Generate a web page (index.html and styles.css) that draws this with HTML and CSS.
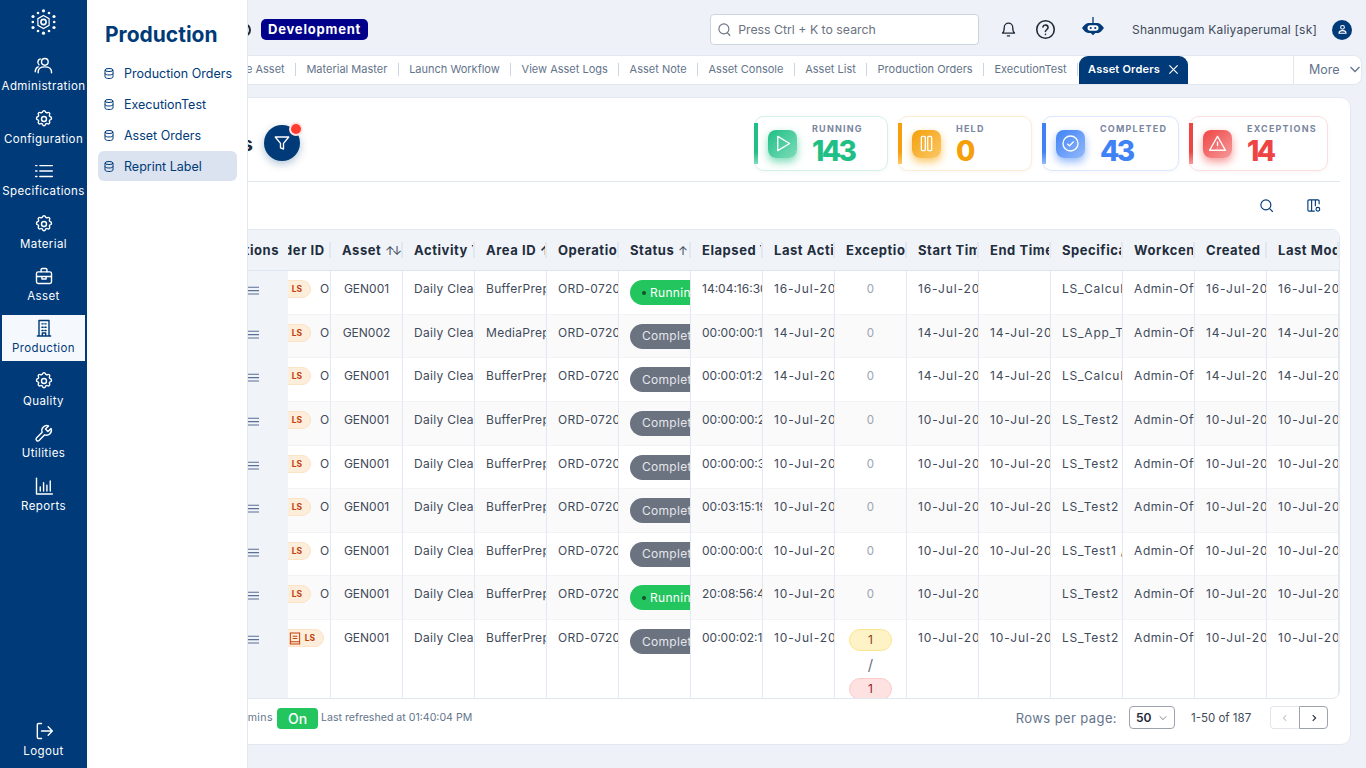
FILE: index.html
```html
<!DOCTYPE html>
<html lang="en">
<head>
  <meta charset="UTF-8">
  <meta name="viewport" content="width=device-width, initial-scale=1.0">
  <title>Asset Orders</title>
  <link rel="stylesheet" href="styles.css">
</head>
<body>
  <svg class="defs" width="0" height="0">
    <symbol id="i-gear" viewBox="0 0 24 24"><circle cx="12" cy="12" r="3"/><path d="M10.3 3.2c.4-1.6 3-1.6 3.4 0a1.7 1.7 0 0 0 2.6 1.1c1.4-.9 3.3 1 2.4 2.4a1.7 1.7 0 0 0 1.1 2.6c1.6.4 1.6 3 0 3.4a1.7 1.7 0 0 0-1.1 2.6c.9 1.4-1 3.3-2.4 2.4a1.7 1.7 0 0 0-2.6 1.1c-.4 1.6-3 1.6-3.4 0a1.7 1.7 0 0 0-2.6-1.1c-1.4.9-3.3-1-2.4-2.4a1.7 1.7 0 0 0-1.1-2.6c-1.6-.4-1.6-3 0-3.4a1.7 1.7 0 0 0 1.1-2.6c-.9-1.4 1-3.3 2.4-2.4a1.7 1.7 0 0 0 2.6-1.1z"/></symbol>
    <symbol id="i-db" viewBox="0 0 24 24"><ellipse cx="12" cy="5" rx="8" ry="3"/><path d="M4 5v14c0 1.700 3.600 3 8 3s8-1.300 8-3V5"/><path d="M4 12c0 1.700 3.600 3 8 3s8-1.300 8-3"/></symbol>
    <symbol id="i-menu" viewBox="0 0 12 12"><path d="M0 2.200h11M0 5.600h11M0 9h11"/></symbol>
  </svg>

  <div class="app">
    <nav class="rail">
      <div class="rail-logo">
        <svg width="25" height="26" viewBox="0 0 25 26" fill="#fff" stroke="#fff">
          <circle cx="12.500" cy="13" r="2.600" fill="none" stroke-width="1.600"/>
          <path d="M12.500 6.500l5.600 3.200v6.600l-5.600 3.200-5.600-3.200V9.700z" fill="none" stroke-width="1.200"/>
          <g stroke="none">
            <circle cx="12.500" cy="1.800" r="1.600"/><circle cx="18" cy="4" r="1.300"/><circle cx="23" cy="7.500" r="1.600"/>
            <circle cx="23.200" cy="13" r="1.300"/><circle cx="23" cy="18.500" r="1.600"/><circle cx="18" cy="22" r="1.300"/>
            <circle cx="12.500" cy="24.200" r="1.600"/><circle cx="7" cy="22" r="1.300"/><circle cx="2" cy="18.500" r="1.600"/>
            <circle cx="1.800" cy="13" r="1.300"/><circle cx="2" cy="7.500" r="1.600"/><circle cx="7" cy="4" r="1.300"/>
          </g>
        </svg>
      </div>
      <a class="rail-item">
        <svg class="rail-icon" viewBox="0 0 24 24"><circle cx="13" cy="7" r="4"/><path d="M5 20v-1c0-3.500 3-6 8-6s8 2.500 8 6v1"/><path d="M7.500 3.600A4 4 0 0 0 6 10.500M1.500 19c0-3 1-5 3.500-6"/></svg>
        <span>Administration</span>
      </a>
      <a class="rail-item"><svg class="rail-icon"><use href="#i-gear"/></svg><span>Configuration</span></a>
      <a class="rail-item">
        <svg class="rail-icon" viewBox="0 0 24 24"><path d="M7 5.500h15M7 12h15M7 18.500h15M2 5.500h1.500M2 12h1.500M2 18.500h1.500"/></svg>
        <span>Specifications</span>
      </a>
      <a class="rail-item"><svg class="rail-icon"><use href="#i-gear"/></svg><span>Material</span></a>
      <a class="rail-item">
        <svg class="rail-icon" viewBox="0 0 24 24"><rect x="3" y="7" width="18" height="14" rx="2"/><path d="M8.500 7V4.500A1.500 1.500 0 0 1 10 3h4a1.500 1.500 0 0 1 1.500 1.500V7M3 12.500h18M9.500 12.500v3h5v-3"/></svg>
        <span>Asset</span>
      </a>
      <a class="rail-item is-active">
        <svg class="rail-icon" viewBox="0 0 24 24"><path d="M6 21.500V3h12v18.500M4 21.500h16M9.500 7h1.500M13 7h1.500M9.500 11h1.500M13 11h1.500M9.500 15h1.500M13 15h1.500M10 21v-3h4v3"/></svg>
        <span>Production</span>
      </a>
      <a class="rail-item"><svg class="rail-icon"><use href="#i-gear"/></svg><span>Quality</span></a>
      <a class="rail-item">
        <svg class="rail-icon" viewBox="0 0 24 24"><path d="M20.500 6.500l-3.800 3.800-3-3 3.800-3.800a6 6 0 0 0-7.700 7.700L3 17.900A2.200 2.200 0 0 0 6.100 21l6.700-6.800a6 6 0 0 0 7.700-7.700z"/></svg>
        <span>Utilities</span>
      </a>
      <a class="rail-item">
        <svg class="rail-icon" viewBox="0 0 24 24"><path d="M3 2.500V21.500h19M7.500 18v-5M11.500 18V8M15.500 18v-7M19.500 18V6"/></svg>
        <span>Reports</span>
      </a>
      <a class="rail-item rail-logout">
        <svg class="rail-icon" viewBox="0 0 24 24"><path d="M9 3H5.500A1.500 1.500 0 0 0 4 4.500v15A1.500 1.500 0 0 0 5.500 21H9M9 12h13M17 7l5 5-5 5"/></svg>
        <span>Logout</span>
      </a>
    </nav>

    <aside class="flyout">
      <h2 class="flyout-title">Production</h2>
      <a class="flyout-item"><svg class="db-icon"><use href="#i-db"/></svg>Production Orders</a>
      <a class="flyout-item"><svg class="db-icon"><use href="#i-db"/></svg>ExecutionTest</a>
      <a class="flyout-item"><svg class="db-icon"><use href="#i-db"/></svg>Asset Orders</a>
      <a class="flyout-item is-active"><svg class="db-icon"><use href="#i-db"/></svg>Reprint Label</a>
    </aside>

    <main class="main">
      <header class="topbar">
        <span class="site-mark"></span>
        <span class="env-badge">Development</span>
        <div class="search">
          <svg class="search-icon" viewBox="0 0 24 24"><circle cx="11" cy="11" r="8"/><path d="M21 22l-4.500-5"/></svg>
          <span>Press Ctrl + K to search</span>
        </div>
        <svg class="top-icon bell" viewBox="0 0 24 24"><path d="M6 9a6 6 0 0 1 12 0c0 6 2.500 8 2.500 8h-17S6 15 6 9zM10.500 21h3"/></svg>
        <svg class="top-icon help" viewBox="0 0 24 24"><circle cx="12" cy="12" r="10"/><path d="M9 9.200a3 3 0 0 1 5.900.8c0 2-3 2.500-3 4.200M12 17.500v.2"/></svg>
        <svg class="bot" viewBox="0 0 24 24" fill="#003a78">
          <path d="M11.300 0h1.400v7h-1.400z"/>
          <path d="M7 6.500h10c3 0 5 3 7 5.500-2 2.500-4 5.500-7 5.500h-2.500L12 20l-2.500-2.500H7c-3 0-5-3-7-5.500 2-2.500 4-5.500 7-5.500z"/>
          <rect x="6" y="9" width="12" height="6" rx="3" fill="#fff"/>
          <circle cx="9.500" cy="12" r="1.200"/><circle cx="14.500" cy="12" r="1.200"/>
        </svg>
        <div class="user">
          <span class="user-name">Shanmugam Kaliyaperumal [sk]</span>
          <span class="avatar">
            <svg viewBox="0 0 24 24"><circle cx="12" cy="8" r="3.500"/><path d="M5.500 19c0-3.500 3-5 6.500-5s6.500 1.500 6.500 5z"/></svg>
          </span>
        </div>
      </header>

      <div class="tabbar">
        <div class="tabs">
          <a class="tab tab-cut">Manage Asset</a>
          <a class="tab">Material Master</a>
          <a class="tab">Launch Workflow</a>
          <a class="tab">View Asset Logs</a>
          <a class="tab">Asset Note</a>
          <a class="tab">Asset Console</a>
          <a class="tab">Asset List</a>
          <a class="tab">Production Orders</a>
          <a class="tab">ExecutionTest</a>
          <a class="tab-active">Asset Orders
            <svg viewBox="0 0 12 12"><path d="M1.500 1.500l9 9M10.500 1.500l-9 9"/></svg>
          </a>
        </div>
        <div class="more">More
          <svg viewBox="0 0 12 12"><path d="M1.500 4l4.500 4.500L10.500 4"/></svg>
        </div>
      </div>

      <section class="card">
        <div class="summary">
          <h1 class="page-title">Asset Orders</h1>
          <button class="filter-btn">
            <svg viewBox="0 0 24 24"><path d="M3 4h18l-7 8.500V20l-4-1.500v-6z"/></svg>
            <span class="filter-dot"></span>
          </button>
          <div class="stats">
            <div class="stat stat-running">
              <span class="stat-icon"><svg viewBox="0 0 24 24"><path d="M6 3l15 9-15 9z"/></svg></span>
              <div class="stat-text"><span class="stat-label">RUNNING</span><span class="stat-value">143</span></div>
            </div>
            <div class="stat stat-held">
              <span class="stat-icon"><svg viewBox="0 0 24 24"><rect x="5.500" y="3" width="5" height="18" rx="1.500"/><rect x="13.500" y="3" width="5" height="18" rx="1.500"/></svg></span>
              <div class="stat-text"><span class="stat-label">HELD</span><span class="stat-value">0</span></div>
            </div>
            <div class="stat stat-done">
              <span class="stat-icon"><svg viewBox="0 0 24 24"><circle cx="12" cy="12" r="9.500"/><path d="M8 12.300l2.800 2.700L16 9.500"/></svg></span>
              <div class="stat-text"><span class="stat-label">COMPLETED</span><span class="stat-value">43</span></div>
            </div>
            <div class="stat stat-error">
              <span class="stat-icon"><svg viewBox="0 0 24 24"><path d="M12 3L2 20.500h20zM12 9.500v5.500M12 17.500v.5"/></svg></span>
              <div class="stat-text"><span class="stat-label">EXCEPTIONS</span><span class="stat-value">14</span></div>
            </div>
          </div>
        </div>

        <div class="toolbar">
          <svg class="tool-icon" viewBox="0 0 24 24"><circle cx="11" cy="11" r="8"/><path d="M17 17l5 5"/></svg>
          <svg class="tool-icon" viewBox="0 0 24 24"><path d="M21 10V5a2 2 0 0 0-2-2H5a2 2 0 0 0-2 2v14a2 2 0 0 0 2 2h9M9 3v18M15 3v10"/><circle cx="19" cy="18" r="3"/></svg>
        </div>

        <div class="table-wrap">
          <table class="orders">
            <colgroup>
              <col class="col-actions"><col class="col-order">
              <col class="col-std"><col class="col-std"><col class="col-std"><col class="col-std"><col class="col-std"><col class="col-std"><col class="col-std">
              <col class="col-std"><col class="col-std"><col class="col-std"><col class="col-std"><col class="col-std"><col class="col-std"><col class="col-std">
            </colgroup>
            <thead>
              <tr>
                <th class="cell-actions">Actions</th>
                <th class="cell-order"><span class="cut">Order ID</span></th>
                <th>Asset <span class="sort">↑↓</span></th>
                <th>Activity Type</th>
                <th>Area ID ↑</th>
                <th>Operation</th>
                <th>Status <span class="sort">↑</span></th>
                <th>Elapsed Time</th>
                <th>Last Activity</th>
                <th>Exceptions</th>
                <th>Start Time</th>
                <th>End Time</th>
                <th>Specification</th>
                <th>Workcenter</th>
                <th>Created</th>
                <th>Last Modified</th>
              </tr>
            </thead>
            <tbody>
              <tr>
                <td class="cell-actions"><svg class="row-menu"><use href="#i-menu"/></svg></td>
                <td class="cell-order"><div class="order-inner"><span class="ls">LS</span><span>ORD-07</span></div></td>
                <td class="center">GEN001</td><td>Daily Cleaning</td><td>BufferPrep</td><td>ORD-07201</td>
                <td><span class="pill pill-run"><i></i>Running</span></td>
                <td>14:04:16:30</td><td>16-Jul-2025</td><td class="center zero">0</td><td>16-Jul-2025</td><td></td><td>LS_Calculate</td><td>Admin-Office</td><td>16-Jul-2025</td><td>16-Jul-2025</td>
              </tr>
              <tr>
                <td class="cell-actions"><svg class="row-menu"><use href="#i-menu"/></svg></td>
                <td class="cell-order"><div class="order-inner"><span class="ls">LS</span><span>ORD-07</span></div></td>
                <td class="center">GEN002</td><td>Daily Cleaning</td><td>MediaPrep</td><td>ORD-07202</td>
                <td><span class="pill pill-done">Completed</span></td>
                <td>00:00:00:12</td><td>14-Jul-2025</td><td class="center zero">0</td><td>14-Jul-2025</td><td>14-Jul-2025</td><td>LS_App_Test</td><td>Admin-Office</td><td>14-Jul-2025</td><td>14-Jul-2025</td>
              </tr>
              <tr>
                <td class="cell-actions"><svg class="row-menu"><use href="#i-menu"/></svg></td>
                <td class="cell-order"><div class="order-inner"><span class="ls">LS</span><span>ORD-07</span></div></td>
                <td class="center">GEN001</td><td>Daily Cleaning</td><td>BufferPrep</td><td>ORD-07203</td>
                <td><span class="pill pill-done">Completed</span></td>
                <td>00:00:01:24</td><td>14-Jul-2025</td><td class="center zero">0</td><td>14-Jul-2025</td><td>14-Jul-2025</td><td>LS_Calculate</td><td>Admin-Office</td><td>14-Jul-2025</td><td>14-Jul-2025</td>
              </tr>
              <tr>
                <td class="cell-actions"><svg class="row-menu"><use href="#i-menu"/></svg></td>
                <td class="cell-order"><div class="order-inner"><span class="ls">LS</span><span>ORD-07</span></div></td>
                <td class="center">GEN001</td><td>Daily Cleaning</td><td>BufferPrep</td><td>ORD-07204</td>
                <td><span class="pill pill-done">Completed</span></td>
                <td>00:00:00:26</td><td>10-Jul-2025</td><td class="center zero">0</td><td>10-Jul-2025</td><td>10-Jul-2025</td><td>LS_Test2 / 1</td><td>Admin-Office</td><td>10-Jul-2025</td><td>10-Jul-2025</td>
              </tr>
              <tr>
                <td class="cell-actions"><svg class="row-menu"><use href="#i-menu"/></svg></td>
                <td class="cell-order"><div class="order-inner"><span class="ls">LS</span><span>ORD-07</span></div></td>
                <td class="center">GEN001</td><td>Daily Cleaning</td><td>BufferPrep</td><td>ORD-07205</td>
                <td><span class="pill pill-done">Completed</span></td>
                <td>00:00:00:31</td><td>10-Jul-2025</td><td class="center zero">0</td><td>10-Jul-2025</td><td>10-Jul-2025</td><td>LS_Test2 / 1</td><td>Admin-Office</td><td>10-Jul-2025</td><td>10-Jul-2025</td>
              </tr>
              <tr>
                <td class="cell-actions"><svg class="row-menu"><use href="#i-menu"/></svg></td>
                <td class="cell-order"><div class="order-inner"><span class="ls">LS</span><span>ORD-07</span></div></td>
                <td class="center">GEN001</td><td>Daily Cleaning</td><td>BufferPrep</td><td>ORD-07206</td>
                <td><span class="pill pill-done">Completed</span></td>
                <td>00:03:15:19</td><td>10-Jul-2025</td><td class="center zero">0</td><td>10-Jul-2025</td><td>10-Jul-2025</td><td>LS_Test2 / 1</td><td>Admin-Office</td><td>10-Jul-2025</td><td>10-Jul-2025</td>
              </tr>
              <tr>
                <td class="cell-actions"><svg class="row-menu"><use href="#i-menu"/></svg></td>
                <td class="cell-order"><div class="order-inner"><span class="ls">LS</span><span>ORD-07</span></div></td>
                <td class="center">GEN001</td><td>Daily Cleaning</td><td>BufferPrep</td><td>ORD-07207</td>
                <td><span class="pill pill-done">Completed</span></td>
                <td>00:00:00:08</td><td>10-Jul-2025</td><td class="center zero">0</td><td>10-Jul-2025</td><td>10-Jul-2025</td><td>LS_Test1 / 1</td><td>Admin-Office</td><td>10-Jul-2025</td><td>10-Jul-2025</td>
              </tr>
              <tr>
                <td class="cell-actions"><svg class="row-menu"><use href="#i-menu"/></svg></td>
                <td class="cell-order"><div class="order-inner"><span class="ls">LS</span><span>ORD-07</span></div></td>
                <td class="center">GEN001</td><td>Daily Cleaning</td><td>BufferPrep</td><td>ORD-07208</td>
                <td><span class="pill pill-run"><i></i>Running</span></td>
                <td>20:08:56:42</td><td>10-Jul-2025</td><td class="center zero">0</td><td>10-Jul-2025</td><td></td><td>LS_Test2 / 1</td><td>Admin-Office</td><td>10-Jul-2025</td><td>10-Jul-2025</td>
              </tr>
              <tr class="row-last">
                <td class="cell-actions"><svg class="row-menu"><use href="#i-menu"/></svg></td>
                <td class="cell-order"><div class="order-inner"><span class="ls ls-note"><svg viewBox="0 0 12 14"><path d="M1 1h10v12H1zM3.500 4.500h5M3.500 7h5M1 10.500h10"/></svg>LS</span></div></td>
                <td class="center">GEN001</td><td>Daily Cleaning</td><td>BufferPrep</td><td>ORD-07209</td>
                <td><span class="pill pill-done">Completed</span></td>
                <td>00:00:02:14</td><td>10-Jul-2025</td>
                <td class="center"><span class="exc exc-warn">1</span><span class="exc-sep">/</span><span class="exc exc-err">1</span></td>
                <td>10-Jul-2025</td><td>10-Jul-2025</td><td>LS_Test2 / 1</td><td>Admin-Office</td><td>10-Jul-2025</td><td>10-Jul-2025</td>
              </tr>
            </tbody>
          </table>
        </div>

        <footer class="card-foot">
          <span class="refresh-label">Auto refresh every 5 mins</span>
          <span class="on-badge">On</span>
          <span class="refreshed">Last refreshed at 01:40:04 PM</span>
          <div class="pager">
            <span class="rows-label">Rows per page:</span>
            <span class="rows-select">50
              <svg viewBox="0 0 12 12"><path d="M2 4l4 4 4-4"/></svg>
            </span>
            <span class="range">1-50 of 187</span>
            <div class="page-btns">
              <button class="page-btn is-off"><svg viewBox="0 0 12 12"><path d="M7.500 2.500L4 6l3.500 3.500"/></svg></button>
              <button class="page-btn"><svg viewBox="0 0 12 12"><path d="M4.500 2.500L8 6 4.500 9.500"/></svg></button>
            </div>
          </div>
        </footer>
      </section>
    </main>
  </div>
</body>
</html>
```

FILE: styles.css
```css
* {
  box-sizing: border-box;
}

html, body {
  height: 100%;
}

body {
  margin: 0;
  font-family: "Inter", "Open Sans", sans-serif;
  background: #eef1f7;
  color: #3f4a5a;
  overflow: hidden;
}

h1, h2 {
  margin: 0;
}

.defs {
  position: absolute;
}

.app {
  position: relative;
  display: flex;
  height: 768px;
}

/* left rail */
.rail {
  width: 87px;
  flex: none;
  display: flex;
  flex-direction: column;
  gap: 6.4px;
  padding: 0 2px;
  background: #003a78;
  color: #fff;
}

.rail-logo {
  height: 47px;
  display: flex;
  align-items: center;
  justify-content: center;
  padding-bottom: 3px;
}

.rail-item {
  height: 46px;
  display: flex;
  flex-direction: column;
  align-items: center;
  justify-content: flex-end;
  gap: 3px;
  padding-bottom: 5px;
  font-size: 11.5px;
  line-height: 15px;
  letter-spacing: 0.4px;
  white-space: nowrap;
}

.rail-icon {
  width: 20px;
  height: 20px;
  fill: none;
  stroke: #fff;
  stroke-width: 1.7;
  stroke-linecap: round;
  stroke-linejoin: round;
}

.rail-item.is-active {
  background: #f5f8fc;
  color: #003a78;
}

.rail-item.is-active .rail-icon {
  stroke: #003a78;
}

.rail-logout {
  margin-top: auto;
  margin-bottom: 4px;
}

/* second level menu, opened over the page */
.flyout {
  position: absolute;
  top: 0;
  left: 87px;
  bottom: 0;
  z-index: 5;
  width: 161px;
  padding: 22px 10px 0 11px;
  background: #fff;
  border-right: 1px solid #e2e8f0;
}

.flyout-title {
  height: 36px;
  padding-left: 7px;
  font-size: 21px;
  line-height: 25px;
  font-weight: 700;
  color: #003a78;
}

.flyout-item {
  height: 30px;
  margin-bottom: 1px;
  display: flex;
  align-items: center;
  gap: 9px;
  padding-left: 5px;
  border-radius: 6px;
  font-size: 12.5px;
  color: #003a78;
  white-space: nowrap;
}

.flyout-item.is-active {
  background: #dae3ef;
}

.db-icon {
  width: 12px;
  height: 13px;
  flex: none;
  fill: none;
  stroke: #003a78;
  stroke-width: 2;
}

/* page */
.main {
  flex: 1;
  min-width: 0;
  display: flex;
  flex-direction: column;
}

.topbar {
  height: 55px;
  flex: none;
  display: flex;
  align-items: center;
  padding: 4px 0 0 150px;
}

.site-mark {
  width: 14px;
  height: 14px;
  border: 2px solid #1f2937;
  border-radius: 50%;
}

.env-badge {
  height: 21px;
  margin-left: 10px;
  padding: 0 7px;
  border-radius: 5px;
  background: #00008b;
  color: #fff;
  font-size: 13px;
  line-height: 20px;
  font-weight: 700;
  letter-spacing: 0.8px;
}

.search {
  width: 269px;
  height: 31px;
  margin-left: 342px;
  display: flex;
  align-items: center;
  gap: 6px;
  padding-left: 6px;
  background: #fff;
  border: 1px solid #cbd5e1;
  border-radius: 4px;
  font-size: 12.3px;
  color: #6b7280;
}

.search-icon {
  width: 15px;
  height: 15px;
  fill: none;
  stroke: #6b7280;
  stroke-width: 1.8;
}

.top-icon {
  fill: none;
  stroke: #1f2937;
  stroke-width: 1.8;
  stroke-linecap: round;
  stroke-linejoin: round;
}

.bell {
  width: 17px;
  height: 17px;
  margin-left: 21px;
}

.help {
  width: 21px;
  height: 21px;
  margin-left: 18px;
}

.bot {
  width: 22px;
  height: 22px;
  margin-left: 26px;
  margin-top: -3px;
}

.user {
  margin-left: auto;
  display: flex;
  align-items: center;
  gap: 15px;
  padding-right: 14px;
}

.user-name {
  font-size: 12px;
  letter-spacing: 0.2px;
}

.avatar {
  width: 20px;
  height: 20px;
  display: flex;
  align-items: center;
  justify-content: center;
  border-radius: 50%;
  background: #003a78;
}

.avatar svg {
  width: 13px;
  height: 13px;
  fill: none;
  stroke: #fff;
  stroke-width: 2;
}

/* tabs */
.tabbar {
  height: 30px;
  flex: none;
  display: flex;
  margin-right: 4px;
  background: #fff;
  border-top: 1px solid #e2e8f0;
  border-bottom: 1px solid #e2e8f0;
  border-right: 1px solid #e2e8f0;
  border-radius: 0 8px 8px 0;
}

.tabs {
  flex: 1;
  min-width: 0;
  display: flex;
  align-items: center;
  padding-left: 113px;
  overflow: hidden;
}

.tab {
  height: 13px;
  margin-bottom: 2px;
  flex: none;
  display: flex;
  align-items: center;
  padding: 0 10.4px;
  border-right: 1px solid #cbd5e1;
  font-size: 11px;
  color: #64748b;
  white-space: nowrap;
}

.tab:last-of-type {
  border-right: none;
}

.tab-active {
  position: relative;
  height: 28px;
  margin-left: 1px;
  flex: none;
  display: flex;
  align-items: center;
  gap: 8px;
  padding: 0 9px 2px;
  background: #003a78;
  border-radius: 9px 9px 0 0;
  color: #fff;
  font-size: 11px;
  font-weight: 600;
  letter-spacing: 0.2px;
  white-space: nowrap;
}

.tab-active svg {
  width: 11px;
  height: 11px;
  fill: none;
  stroke: #fff;
  stroke-width: 1.3;
}

.more {
  width: 68px;
  flex: none;
  display: flex;
  align-items: center;
  gap: 9px;
  padding: 0 0 2px 15px;
  border-left: 1px solid #e2e8f0;
  font-size: 12.5px;
  color: #64748b;
}

.more svg {
  width: 12px;
  height: 12px;
  fill: none;
  stroke: #64748b;
  stroke-width: 1.3;
}

/* main card */
.card {
  height: 648px;
  margin: 12px 15px 0 10px;
  display: flex;
  flex-direction: column;
  padding: 0 10px 0 9px;
  background: #fff;
  border: 1px solid #e2e8f0;
  border-radius: 10px;
}

.summary {
  flex: none;
  display: flex;
  align-items: center;
  padding: 18px 0 10px;
  border-bottom: 1px solid #e2e8f0;
}

.page-title {
  width: 146px;
  flex: none;
  padding-left: 1px;
  font-size: 20px;
  font-weight: 700;
  color: #1f2937;
  text-align: right;
  white-space: nowrap;
}

.filter-btn {
  position: relative;
  width: 36px;
  height: 36px;
  margin: -1px 0 0 11px;
  display: flex;
  align-items: center;
  justify-content: center;
  padding: 0;
  border: none;
  border-radius: 50%;
  background: #003a78;
  box-shadow: 0 3px 9px rgba(0, 58, 120, 0.3);
}

.filter-btn svg {
  width: 18px;
  height: 18px;
  fill: none;
  stroke: #fff;
  stroke-width: 1.8;
  stroke-linejoin: round;
}

.filter-dot {
  position: absolute;
  top: -1px;
  right: -1px;
  width: 10px;
  height: 10px;
  border-radius: 50%;
  background: #ff3b30;
  box-shadow: 0 0 0 2px #fde4e2;
}

.stats {
  margin-left: auto;
  margin-right: 12px;
  display: flex;
  gap: 10px;
}

.stat {
  position: relative;
  height: 55px;
  display: flex;
  align-items: center;
  gap: 15px;
  padding-left: 13px;
  background: #fff;
  border: 1px solid;
  border-radius: 10px;
  box-shadow: 0 1px 4px rgba(15, 23, 42, 0.04);
}

.stat::before {
  content: "";
  position: absolute;
  left: -1px;
  top: 6px;
  bottom: 6px;
  width: 4px;
  background: linear-gradient(to bottom, var(--tone) 70%, var(--tone-soft));
}

.stat-running { width: 134px; border-color: #d3f2e6; --tone: #1fbf85; --tone-soft: #7edcb9; }
.stat-held { width: 134px; border-color: #fdedd3; --tone: #f59f0b; --tone-soft: #fbc867; }
.stat-done { width: 137px; border-color: #dbe7fe; --tone: #3f82f6; --tone-soft: #93b9fa; }
.stat-error { width: 139px; border-color: #fddede; --tone: #ef4444; --tone-soft: #f79a9a; }

.stat-icon {
  width: 29px;
  height: 28px;
  flex: none;
  display: flex;
  align-items: center;
  justify-content: center;
  border-radius: 8px;
  background: linear-gradient(135deg, var(--tone), var(--tone-soft));
  box-shadow: 0 4px 9px var(--tone-soft);
}

.stat-icon svg {
  width: 19px;
  height: 19px;
  fill: none;
  stroke: #fff;
  stroke-width: 1.7;
  stroke-linejoin: round;
}

.stat-text {
  display: flex;
  flex-direction: column;
}

.stat-label {
  font-size: 9px;
  line-height: 12px;
  font-weight: 700;
  letter-spacing: 1.2px;
  color: #7a86a0;
}

.stat-value {
  margin-top: 2px;
  font-size: 28px;
  line-height: 28px;
  font-weight: 800;
  letter-spacing: -2.6px;
  color: var(--tone);
}

.toolbar {
  height: 47px;
  flex: none;
  display: flex;
  align-items: center;
  justify-content: flex-end;
  gap: 32px;
  padding: 0 19px 0 0;
}

.tool-icon {
  width: 15px;
  height: 15px;
  fill: none;
  stroke: #003a78;
  stroke-width: 1.8;
}

/* table */
.table-wrap {
  flex: 1;
  min-height: 0;
  overflow: hidden;
  border: 1px solid #e2e8f0;
  border-radius: 0 8px 8px 0;
}

.orders {
  table-layout: fixed;
  width: 1231px;
  border-collapse: separate;
  border-spacing: 0;
  font-size: 12px;
}

.col-actions { width: 180px; }
.col-order { width: 43px; }
.col-std { width: 72px; }

.orders th {
  position: relative;
  height: 41px;
  padding: 0 0 0 11px;
  background: #f0f4f9;
  border-bottom: 1px solid #dde6f0;
  font-size: 13px;
  font-weight: 700;
  letter-spacing: 0.55px;
  color: #1f2d3d;
  text-align: left;
  white-space: nowrap;
  overflow: hidden;
}

.orders th::after {
  content: "";
  position: absolute;
  top: 12px;
  right: 0;
  width: 2px;
  height: 16px;
  background: #e1e8f1;
}

.orders th.cell-actions::after {
  display: none;
}

.sort {
  font-size: 12px;
  font-weight: 400;
  color: #3f4a5a;
  letter-spacing: -3px;
}

.orders td {
  height: 43.625px;
  padding: 9px 0 0 11px;
  border-right: 1px solid #e1e9f2;
  border-bottom: 1px solid #f1f3f6;
  line-height: 18px;
  letter-spacing: 0.3px;
  vertical-align: top;
  white-space: nowrap;
  overflow: hidden;
}

/* date columns run wider in the source font */
.orders td:nth-child(9),
.orders td:nth-child(11),
.orders td:nth-child(12),
.orders td:nth-child(15),
.orders td:nth-child(16) {
  letter-spacing: 0.9px;
}

.orders td:nth-child(8) {
  letter-spacing: 0;
}

.orders td:nth-child(13) {
  letter-spacing: 0.8px;
}

.orders td:nth-child(14) {
  letter-spacing: 0.6px;
}

.orders tbody tr:nth-child(even) td {
  background: #fafafa;
}

.orders td.cell-actions,
.orders tbody tr:nth-child(even) td.cell-actions {
  padding: 5px 28px 0 0;
  background: #f0f3f8;
  border-right: none;
  border-bottom: none;
  text-align: right;
}

.orders th.cell-actions {
  padding: 0 9px 0 0;
  text-align: right;
}

.row-menu {
  width: 12px;
  height: 12px;
  margin-top: 9px;
  fill: none;
  stroke: #5b6f95;
  stroke-width: 1.1;
}

.orders th.cell-order {
  padding-left: 0;
}

.cut {
  display: block;
  margin-left: -20px;
}

.orders td.cell-order {
  padding-left: 0;
}

.order-inner {
  display: flex;
  align-items: flex-start;
  gap: 9px;
  margin-left: -27px;
}

.ls {
  height: 18px;
  width: 50px;
  flex: none;
  display: flex;
  align-items: center;
  justify-content: flex-end;
  padding-right: 8px;
  background: #fdeedb;
  border: 1px solid #fce3c6;
  border-radius: 9px;
  font-size: 8.5px;
  font-weight: 700;
  letter-spacing: 0;
  color: #c2410c;
}

.ls-note {
  width: 63px;
  gap: 4px;
}

.ls-note svg {
  width: 12px;
  height: 13px;
  fill: none;
  stroke: #c2410c;
  stroke-width: 1.1;
}

.orders td.center {
  padding-left: 0;
  letter-spacing: 0;
  text-align: center;
}

.orders td.zero {
  font-size: 11.5px;
  color: #9ca3af;
}

.pill {
  height: 25px;
  display: inline-flex;
  align-items: center;
  padding: 0 20px 0 12px;
  border-radius: 13px;
  font-size: 12px;
  letter-spacing: 0.3px;
}

.pill-run {
  background: #22c55e;
  color: #fff;
}

.pill-run i {
  width: 4px;
  height: 4px;
  margin-right: 4px;
  border-radius: 50%;
  background: #14532d;
}

.pill-done {
  background: #6b7280;
  color: #e5e7eb;
}

.exc {
  display: block;
  width: 43px;
  height: 22px;
  margin: 0 auto;
  border: 1px solid;
  border-radius: 11px;
  font-size: 12px;
  line-height: 20px;
}

.exc-warn {
  background: #fef3c7;
  border-color: #fde68a;
  color: #92400e;
}

.exc-err {
  background: #fee2e2;
  border-color: #fecaca;
  color: #991b1b;
}

.exc-sep {
  display: block;
  height: 27px;
  font-size: 15px;
  line-height: 27px;
  color: #6b7280;
}

/* footer of card */
.card-foot {
  height: 45px;
  flex: none;
  display: flex;
  align-items: flex-start;
  padding-top: 8px;
  font-size: 10.6px;
  color: #64748b;
}

.refresh-label {
  width: 166px;
  margin-right: 4px;
  line-height: 21px;
  letter-spacing: 0.4px;
  text-align: right;
  white-space: nowrap;
  overflow: hidden;
}

.on-badge {
  width: 41px;
  height: 21px;
  margin-top: 1px;
  background: #22c55e;
  border-radius: 4px;
  color: #fff;
  font-size: 14px;
  font-weight: 500;
  line-height: 21px;
  text-align: center;
}

.refreshed {
  margin-left: 3px;
  line-height: 21px;
  white-space: nowrap;
}

.pager {
  margin-left: auto;
  margin-right: 12px;
  margin-top: -1px;
  display: flex;
  align-items: center;
}

.rows-label {
  font-size: 13px;
  letter-spacing: 0.4px;
}

.rows-select {
  width: 46px;
  height: 23px;
  margin-left: 12px;
  display: flex;
  align-items: center;
  justify-content: space-between;
  padding: 0 6px;
  border: 1px solid #9ca3af;
  border-radius: 4px;
  font-size: 12px;
  font-weight: 600;
  color: #1f2937;
}

.rows-select svg {
  width: 10px;
  height: 10px;
  fill: none;
  stroke: #6b7280;
  stroke-width: 1;
}

.range {
  width: 63px;
  margin-left: 16px;
  font-size: 11.5px;
  color: #3f4a5a;
  white-space: nowrap;
}

.page-btns {
  margin-left: 16px;
  display: flex;
}

.page-btn {
  width: 29px;
  height: 23px;
  display: flex;
  align-items: center;
  justify-content: center;
  padding: 0;
  background: #fff;
  border: 1px solid #9ca3af;
  border-radius: 0 4px 4px 0;
}

.page-btn.is-off {
  border-color: #e2e5ea;
  border-right: none;
  border-radius: 4px 0 0 4px;
}

.page-btn svg {
  width: 10px;
  height: 10px;
  fill: none;
  stroke: #1f2937;
  stroke-width: 1.3;
}

.page-btn.is-off svg {
  stroke: #c4c9d1;
}
```
